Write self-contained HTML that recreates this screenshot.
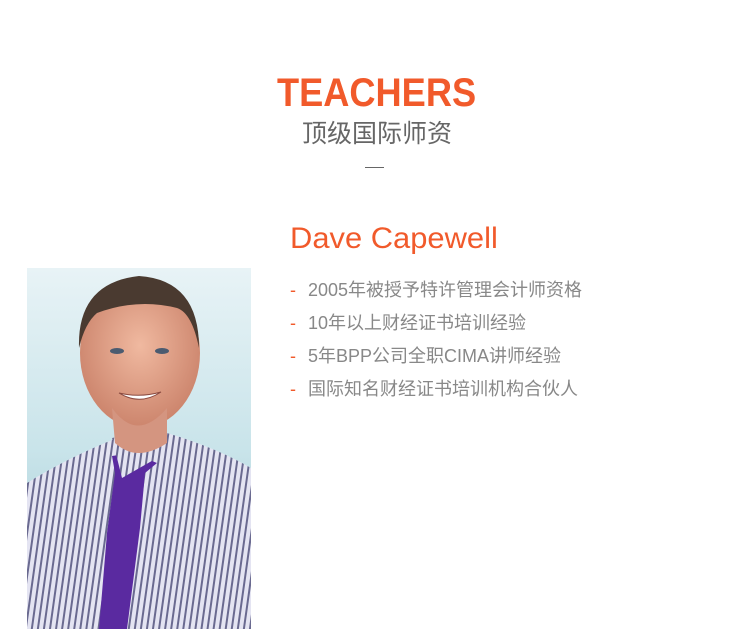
<!DOCTYPE html><html><head><meta charset="utf-8"><style>
body{margin:0;width:750px;height:629px;background:#fff;position:relative;overflow:hidden;font-family:"Liberation Sans","Noto Sans CJK SC",sans-serif}
.a{position:absolute;white-space:nowrap}
.t{left:277px;top:70px;font-size:40px;font-weight:bold;color:#f15a2b;line-height:46px;transform:scaleX(0.905);transform-origin:0 0}
.s{left:302px;top:118px;font-size:25px;color:#666;line-height:33px}
.l{left:365px;top:167px;width:19px;height:1px;background:#666}
.n{left:290px;top:219px;font-size:30px;color:#f15a2b;line-height:40px;transform:scaleX(1.03);transform-origin:0 0}
.b{left:290px;font-size:18px;color:#888;line-height:24px}
.b span{color:#f15a2b;margin-right:12px}
</style></head><body>
<div class="a t">TEACHERS</div>
<div class="a s">顶级国际师资</div>
<div class="a l"></div>
<div class="a n">Dave Capewell</div>
<div class="a b" style="top:278px"><span>-</span>2005年被授予特许管理会计师资格</div>
<div class="a b" style="top:311px"><span>-</span>10年以上财经证书培训经验</div>
<div class="a b" style="top:344px"><span>-</span>5年BPP公司全职CIMA讲师经验</div>
<div class="a b" style="top:377px"><span>-</span>国际知名财经证书培训机构合伙人</div>
<svg class="a" style="left:27px;top:268px" width="224" height="361" viewBox="0 0 224 361">
<defs>
<linearGradient id="bg" x1="0" y1="0" x2="0" y2="1"><stop offset="0" stop-color="#e8f3f6"/><stop offset=".5" stop-color="#c9e4ea"/><stop offset="1" stop-color="#9fc8d2"/></linearGradient>
<pattern id="st" width="6" height="6" patternUnits="userSpaceOnUse" patternTransform="rotate(8)"><rect width="6" height="6" fill="#e4e4f2"/><rect width="2" height="6" fill="#6a6a90"/></pattern>
<radialGradient id="sk" cx=".5" cy=".45" r=".6"><stop offset="0" stop-color="#f0b9a0"/><stop offset="1" stop-color="#c98068"/></radialGradient>
</defs>
<rect width="224" height="361" fill="url(#bg)"/>
<path d="M0 215 Q40 190 90 170 L140 165 Q190 180 224 200 L224 361 L0 361Z" fill="url(#st)"/>
<path d="M85 188 L105 185 L130 195 L118 205 L113 260 L100 361 L72 361 L80 265 L88 205Z" fill="#5a2aa0"/>
<path d="M85 170 L95 210 L130 190 L135 160 Z" fill="url(#st)"/>
<ellipse cx="113" cy="85" rx="60" ry="75" fill="url(#sk)"/>
<path d="M85 140 Q110 175 140 140 L140 175 Q110 195 88 175Z" fill="#d49580"/>
<path d="M52 80 Q50 15 112 8 Q172 12 172 80 Q165 45 150 40 Q110 30 70 45 Q58 55 52 80Z" fill="#4a3a30"/>
<ellipse cx="90" cy="83" rx="7" ry="3" fill="#4b5b70"/><ellipse cx="135" cy="83" rx="7" ry="3" fill="#4b5b70"/>
<path d="M92 125 Q113 138 134 124 Q113 130 92 125Z" fill="#fff" stroke="#8a4a40"/>
</svg>
</body></html>
